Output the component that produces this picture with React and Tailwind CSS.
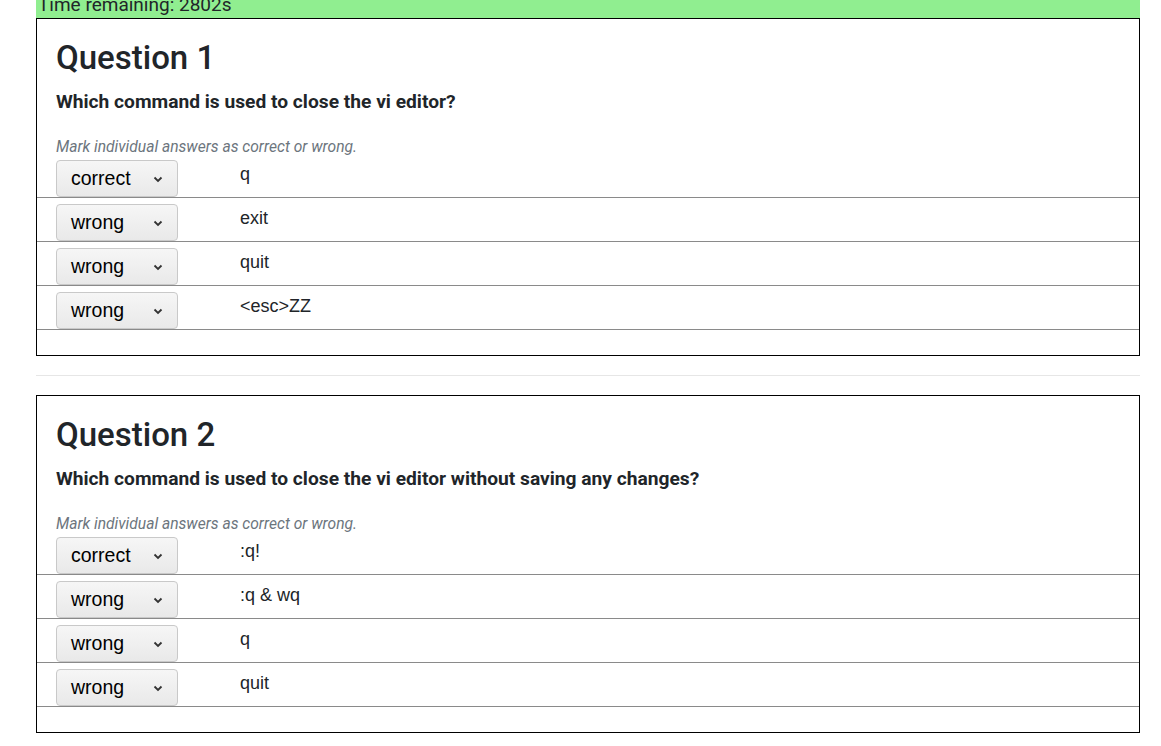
const questions = [
  {
    id: 1,
    text: "Which command is used to close the vi editor?",
    answers: [
      { mark: "correct", label: "q" },
      { mark: "wrong", label: "exit" },
      { mark: "wrong", label: "quit" },
      { mark: "wrong", label: "<esc>ZZ" },
    ],
  },
  {
    id: 2,
    text: "Which command is used to close the vi editor without saving any changes?",
    answers: [
      { mark: "correct", label: ":q!" },
      { mark: "wrong", label: ":q & wq" },
      { mark: "wrong", label: "q" },
      { mark: "wrong", label: "quit" },
    ],
  },
];

function MarkSelect({ value }) {
  return (
    <div className="mt-[6px] flex h-[37px] w-[122px] items-center justify-between rounded-[4px] border border-[#c9c9c9] bg-gradient-to-b from-[#f6f6f6] to-[#e9e9e9] pl-[14px] pr-[14px] font-['Liberation_Sans',Arial,sans-serif] text-[19.5px] text-black">
      <span className="leading-none">{value}</span>
      <svg width="10" height="7" viewBox="0 0 10 7" className="mt-[2px]">
        <path d="M1.5 1.5 L5 5 L8.5 1.5" fill="none" stroke="#333" strokeWidth="1.8" />
      </svg>
    </div>
  );
}

function QuestionCard({ q }) {
  return (
    <section className="border border-black">
      <div className="pl-[19px] pr-5 pt-[19px]">
        <h2 className="text-[33px] font-medium leading-[40px] text-[#212529]">Question {q.id}</h2>
        <p className="mt-[12px] text-[19.2px] font-bold leading-[24px] text-[#212529]">{q.text}</p>
        <p className="mt-[26px] text-[15.6px] italic leading-[14px] text-[#6c757d]">
          Mark individual answers as correct or wrong.
        </p>
      </div>
      <div className="mb-[25px]">
        {q.answers.map((a, i) => (
          <div key={i} className="flex h-[44px] items-start border-b border-[#8a8a8a] pl-[19px]">
            <MarkSelect value={a.mark} />
            <span className="ml-[62px] pt-[8px] font-['Liberation_Sans',Arial,sans-serif] text-[18px] leading-[24px] text-[#212529]">
              {a.label}
            </span>
          </div>
        ))}
      </div>
    </section>
  );
}

export default function App() {
  return (
    <div className="min-h-screen bg-white font-['Roboto',sans-serif]">
      <div className="ml-[36px] w-[1104px] overflow-hidden">
        <div className="-mt-[9px] h-[27px] bg-[#90ee90] pl-[2px] text-[19px] leading-[27px] text-[#212529]">
          Time remaining: 2802s
        </div>
        <QuestionCard q={questions[0]} />
        <hr className="my-[19px] border-t border-[#e6e6e6]" />
        <QuestionCard q={questions[1]} />
      </div>
    </div>
  );
}
